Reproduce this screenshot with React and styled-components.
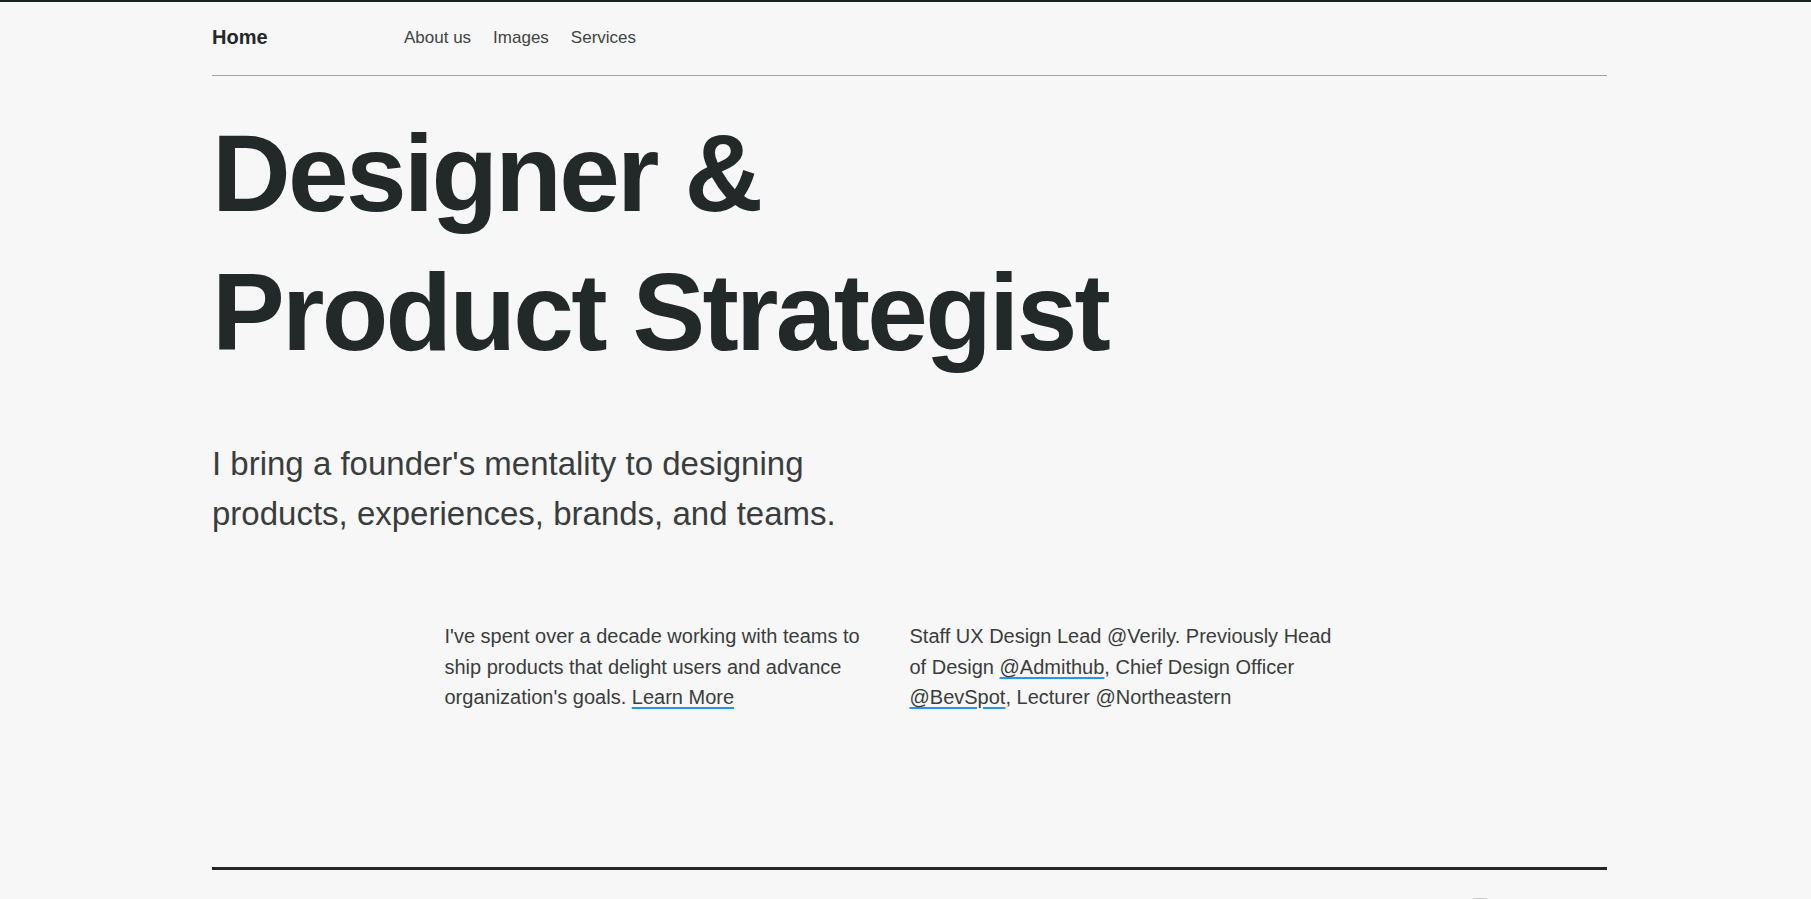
import React from 'react';
import styled, { createGlobalStyle } from 'styled-components';

const GlobalStyle = createGlobalStyle`
  html, body {
    margin: 0;
    padding: 0;
  }
  body {
    background: #f6f7f6;
    border-top: 2px solid #1c1f1f;
    font-family: "Liberation Sans", Arial, sans-serif;
    color: #232828;
    overflow: hidden;
  }
`

const Page = styled.div`
  width: 1395px;
  margin-left: 212px;
`

const Header = styled.header`
  display: flex;
  align-items: center;
  padding: 24px 0 26px;
  border-bottom: 1px solid #a2a2a2;
`

const Brand = styled.a`
  width: 192px;
  font-size: 20px;
  line-height: 23px;
  font-weight: 700;
  color: #232828;
  text-decoration: none;
`

const NavList = styled.nav`
  display: flex;
  gap: 22px;
`

const NavLink = styled.a`
  font-size: 17px;
  line-height: 20px;
  color: #404444;
  text-decoration: none;
`

const Title = styled.h1`
  margin: 28px 0 0;
  font-size: 109px;
  line-height: 139px;
  font-weight: 700;
  letter-spacing: -2.7px;
  color: #232928;
`

const Lead = styled.p`
  margin: 57px 0 0;
  max-width: 680px;
  font-size: 33px;
  line-height: 50px;
  color: #3a3d3d;
`

const Columns = styled.section`
  display: grid;
  grid-template-columns: repeat(6, 1fr);
  margin-top: 82px;
`

const Blurb = styled.p`
  grid-column: ${p => p.$start} / span 2;
  margin: 0;
  padding-right: 30px;
  font-size: 20px;
  line-height: 30.5px;
  color: #3a3d3d;
`

const Link = styled.a`
  color: inherit;
  text-decoration: underline;
  text-decoration-color: #2196f3;
  text-decoration-thickness: 2px;
  text-underline-offset: 3px;
`

const Rule = styled.hr`
  margin: 154px 0 0;
  border: 0;
  height: 3px;
  background: #222828;
`

const Footer = styled.footer`
  display: flex;
  justify-content: flex-end;
  padding-top: 28px;
  padding-right: 95px;
`

const Avatar = styled.div`
  width: 64px;
  height: 64px;
  border-radius: 50%;
  background: radial-gradient(circle at 50% 30%, #d0d0d0, #9a9a9a);
`

export default function App() {
  return (
    <>
      <GlobalStyle />
      <Page>
        <Header>
          <Brand href="#">Home</Brand>
          <NavList>
            <NavLink href="#">About us</NavLink>
            <NavLink href="#">Images</NavLink>
            <NavLink href="#">Services</NavLink>
          </NavList>
        </Header>
        <Title>
          Designer &amp;<br />
          Product Strategist
        </Title>
        <Lead>
          I bring a founder's mentality to designing products, experiences, brands, and teams.
        </Lead>
        <Columns>
          <Blurb $start={2}>
            I've spent over a decade working with teams to ship products that delight users and
            advance organization's goals. <Link href="#">Learn More</Link>
          </Blurb>
          <Blurb $start={4}>
            Staff UX Design Lead @Verily. Previously Head of Design <Link href="#">@Admithub</Link>,
            Chief Design Officer <Link href="#">@BevSpot</Link>, Lecturer @Northeastern
          </Blurb>
        </Columns>
        <Rule />
        <Footer>
          <Avatar />
        </Footer>
      </Page>
    </>
  );
}
